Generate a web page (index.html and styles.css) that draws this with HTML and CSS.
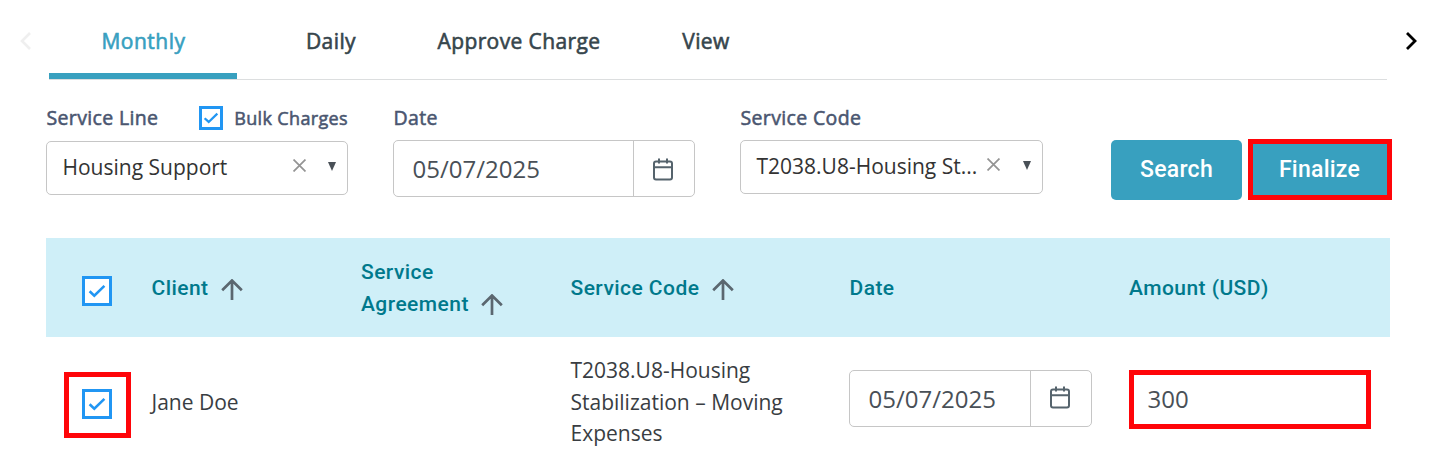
FILE: index.html
```html
<!DOCTYPE html>
<html lang="en">
<head>
<meta charset="utf-8">
<title>Charges</title>
<link rel="stylesheet" href="styles.css">
</head>
<body>
<svg class="defs" width="0" height="0" aria-hidden="true">
  <symbol id="check" viewBox="0 0 18 14"><path d="M1.6 7.3 6.3 11.6 16.4 1.9" fill="none" stroke="#2196f3" stroke-width="2.6"/></symbol>
  <symbol id="up" viewBox="0 0 22 22"><path d="M11 21V2M1.200 11.2 11 1.5l9.8 9.7" fill="none" stroke="#5b6770" stroke-width="2.7"/></symbol>
  <symbol id="calendar" viewBox="0 0 20 23"><path d="M1 5.500q0-2 2-2h14q2 0 2 2v14q0 2-2 2H3q-2 0-2-2zM1 9.200h18M6 0.500v5M14 0.500v5" fill="none" stroke="#55636c" stroke-width="2"/></symbol>
  <symbol id="clear" viewBox="0 0 12 12"><path d="M.5.5l11 11M11.500.5l-11 11" fill="none" stroke="#949494" stroke-width="1.6"/></symbol>
  <symbol id="caret" viewBox="0 0 8 9"><path d="M0 0h8L4 9z" fill="#495057"/></symbol>
</svg>
<header class="tabs">
  <svg class="arrow" width="11" height="18" viewBox="0 0 11 18"><path d="M10 1 2 9l8 8" fill="none" stroke="#efefef" stroke-width="2.6"/></svg>
  <nav class="tab-list">
    <a class="tab active">Monthly</a>
    <a class="tab daily">Daily</a>
    <a class="tab approve">Approve Charge</a>
    <a class="tab view">View</a>
  </nav>
  <svg class="arrow next" width="11" height="18" viewBox="0 0 11 18"><path d="M1 1l8 8-8 8" fill="none" stroke="#000" stroke-width="2.8"/></svg>
</header>
<main class="content">
  <section class="filters">
    <div class="field">
      <div class="label-row">
        <label>Service Line</label>
        <span class="bulk"><span class="box small"><svg width="16" height="12"><use href="#check"/></svg></span><span>Bulk Charges</span></span>
      </div>
      <div class="select low"><span class="value">Housing Support</span><svg class="clear" width="13" height="13"><use href="#clear"/></svg><svg class="caret" width="8" height="9"><use href="#caret"/></svg></div>
    </div>
    <div class="field">
      <div class="label-row"><label>Date</label></div>
      <div class="date"><span class="date-text">05/07/2025</span><span class="date-button"><svg width="20" height="23"><use href="#calendar"/></svg></span></div>
    </div>
    <div class="field">
      <div class="label-row"><label>Service Code</label></div>
      <div class="select code"><span class="value">T2038.U8-Housing St...</span><svg class="clear" width="13" height="13"><use href="#clear"/></svg><svg class="caret" width="8" height="9"><use href="#caret"/></svg></div>
    </div>
    <button class="button search">Search</button>
    <button class="button finalize">Finalize</button>
  </section>
  <section class="table">
    <div class="row head">
      <div class="pick"><span class="box"><svg width="18" height="14"><use href="#check"/></svg></span></div>
      <div class="cell">Client<svg class="sort" width="22" height="22"><use href="#up"/></svg></div>
      <div class="cell two"><span>Service<br>Agreement</span><svg class="sort" width="22" height="22"><use href="#up"/></svg></div>
      <div class="cell">Service Code<svg class="sort" width="22" height="22"><use href="#up"/></svg></div>
      <div class="cell">Date</div>
      <div class="cell last">Amount (USD)</div>
    </div>
    <div class="row body">
      <div class="pick"><span class="frame"><span class="box"><svg width="18" height="14"><use href="#check"/></svg></span></span></div>
      <div class="cell name">Jane Doe</div>
      <div class="cell"></div>
      <div class="cell code-text">T2038.U8-Housing<br>Stabilization – Moving<br>Expenses</div>
      <div class="cell"><div class="date short"><span class="date-text">05/07/2025</span><span class="date-button"><svg width="20" height="23"><use href="#calendar"/></svg></span></div></div>
      <div class="cell"><div class="amount">300</div></div>
    </div>
  </section>
</main>
</body>
</html>
```
FILE: styles.css
```css
* { box-sizing: border-box; }
body { margin: 0; background: #fff; font-family: "Open Sans", "Noto Sans", sans-serif; color: #3a3f45; overflow: hidden; white-space: nowrap; }
.defs { display: block; height: 0; }
.tabs { display: flex; height: 80px; padding-left: 20px; }
.arrow { margin-top: 32px; flex: none; }
.tab-list { display: flex; width: 1338px; height: 80px; margin-left: 18px; border-bottom: 1px solid #dcdedf; }
.arrow.next { margin-left: 18.5px; }
.tab { display: flex; justify-content: center; height: 79px; padding-top: 27px; font-size: 21px; line-height: 29px; letter-spacing: .4px; -webkit-text-stroke: .6px currentColor; color: #36454c; }
.tab.active { width: 188px; padding-left: 1px; color: #38a0bf; border-bottom: 6px solid #38a0bf; letter-spacing: .5px; }
.tab.daily { width: 188px; }
.tab.approve { width: 187px; padding-left: 1px; }
.tab.view { width: 188px; }
.content { padding-left: 46px; }
.filters { display: flex; height: 158px; padding-top: 22px; }
.field { width: 302px; margin-right: 45px; flex: none; }
.label-row { display: flex; justify-content: space-between; align-items: center; height: 32px; margin-bottom: 6px; padding-left: .5px; font-size: 19.5px; letter-spacing: .35px; -webkit-text-stroke: .55px currentColor; color: #4a5670; }
.label-row label { padding-bottom: 2px; }
.bulk { display: flex; align-items: center; gap: 11px; font-size: 18px; letter-spacing: .35px; }
.box { display: flex; align-items: center; justify-content: center; width: 30px; height: 30px; border: 3px solid #2196f3; background: #fff; }
.box svg { flex: none; }
.box.small { width: 24px; height: 24px; }
.select { display: flex; align-items: center; height: 54px; padding: 0 11px 2px 15.5px; border: 1px solid #c6c6c6; border-radius: 5px; font-size: 21px; color: #333; }
.select.low { margin-top: 7px; }
.select .value { flex: 1; }
.select .clear { margin-right: 22px; margin-top: -3px; }
.select .caret { margin-top: -1px; }
.select.code { width: 303px; }
.select.code .clear { margin-right: 23px; }
.date { display: flex; height: 57px; border: 1px solid #c6c6c6; border-radius: 5px; color: #495057; font-size: 24px; }
.date-text { flex: 1; padding-left: 18.5px; line-height: 56px; }
.date-button { display: flex; align-items: center; justify-content: center; width: 61px; padding-right: 2px; padding-top: 1px; border-left: 1px solid #c6c6c6; }
.button { height: 60px; margin: 38px 0 0; padding: 0 0 2px; border: 0; border-radius: 5px; background: #38a0bf; color: #fff; font: 500 23px Roboto, sans-serif; letter-spacing: .25px; }
.search { width: 131px; margin-left: 24px; }
.finalize { width: 144px; height: 61px; margin: 37px 0 0 6px; padding: 0 1px 0 0; border: 5px solid #ff0509; border-radius: 0; }
.table { width: 1344px; }
.row { display: grid; grid-template-columns: 105px 210px 209px 279px 280px 261px; align-items: center; }
.head { height: 99px; background: #cfeff8; color: #00798c; font: 500 21px/32px Roboto, sans-serif; letter-spacing: .45px; }
.head .cell { display: flex; align-items: center; padding-left: .5px; }
.sort { margin-left: 12.5px; margin-top: 4px; }
.head .cell.two { align-items: flex-end; padding-left: 0; }
.head .cell.last { padding-left: 0; }
.two .sort { margin: 0 0 4px 12.5px; }
.pick { padding-left: 36px; padding-top: 6px; }
.body { height: 128px; font-size: 21px; line-height: 31.5px; color: #393d42; }
.name { padding: 4px 0 0 .5px; }
.code-text { padding: 3px 0 0 .5px; }
.frame { display: flex; align-items: center; justify-content: center; width: 67px; height: 66px; margin-left: -18px; margin-top: 2px; padding: 0 1px 2px 0; border: 5px solid #ff0509; }
.date.short { width: 243px; margin-top: -6px; }
.short .date-button { padding-top: 0; padding-bottom: 1px; }
.amount { width: 242px; height: 59px; margin-top: -4px; padding-left: 13.5px; border: 5px solid #ff0509; color: #495057; font-size: 24px; line-height: 48px; }
```
